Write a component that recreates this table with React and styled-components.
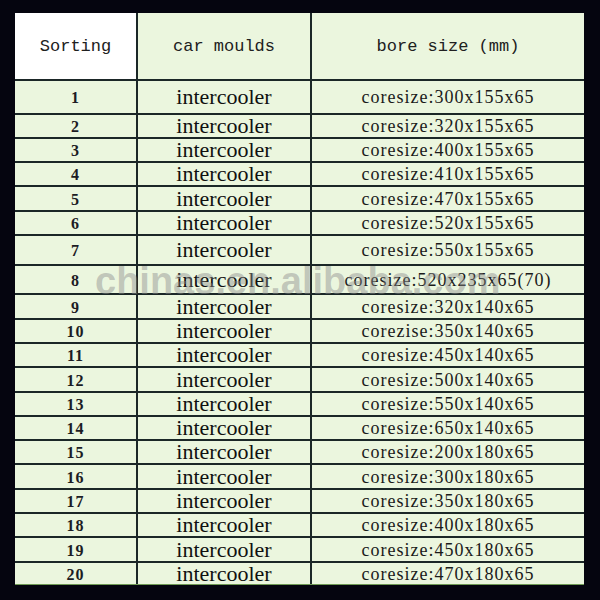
import React from 'react';
import styled, { createGlobalStyle } from 'styled-components';

const GlobalStyle = createGlobalStyle`
  html, body {
    margin: 0;
    padding: 0;
    background: #05050f;
  }
`;

const Page = styled.div`
  width: 600px;
  height: 600px;
  padding: 13px 0 0 15px;
  box-sizing: border-box;
  background: #05050f;
`;

const Table = styled.div`
  position: relative;
  width: 569px;
  display: grid;
  grid-template-columns: 121px 172px 272px;
  grid-template-rows: ${(p) => p.$rows};
  gap: 2px;
  background: #1b2727;
  border-bottom: 1px solid #6f9a55;
`;

const Cell = styled.div`
  display: flex;
  align-items: center;
  justify-content: center;
  background: ${(p) => (p.$white ? '#ffffff' : '#ebf6de')};
  color: #141414;
  line-height: 1;
  white-space: nowrap;
`;

const HeadCell = styled(Cell)`
  font-family: 'Liberation Mono', monospace;
  font-size: 17px;
  color: #202020;
`;

const NumCell = styled(Cell)`
  font-family: 'Liberation Serif', serif;
  font-weight: bold;
  font-size: 16px;
  letter-spacing: 1px;
  color: #1c1c24;
  padding-top: 2px;
`;

const NameCell = styled(Cell)`
  font-family: 'Liberation Serif', serif;
  font-size: 22px;
  color: #101010;
`;

const SizeCell = styled(Cell)`
  font-family: 'Liberation Serif', serif;
  font-size: 18px;
  letter-spacing: 1px;
  color: #1a1a1a;
`;

const Watermark = styled.div`
  position: absolute;
  left: 80px;
  top: 249px;
  font-family: 'Liberation Sans', Arial, sans-serif;
  font-weight: bold;
  font-size: 38px;
  line-height: 38px;
  color: rgba(140, 140, 140, 0.45);
  white-space: nowrap;
  pointer-events: none;
`;

const rows = [
  { h: 32, size: 'coresize:300x155x65' },
  { h: 22, size: 'coresize:320x155x65' },
  { h: 22, size: 'coresize:400x155x65' },
  { h: 22, size: 'coresize:410x155x65' },
  { h: 23, size: 'coresize:470x155x65' },
  { h: 22, size: 'coresize:520x155x65' },
  { h: 28, size: 'coresize:550x155x65' },
  { h: 27, size: 'coresize:520x235x65(70)' },
  { h: 23, size: 'coresize:320x140x65' },
  { h: 22, size: 'corezise:350x140x65' },
  { h: 22, size: 'coresize:450x140x65' },
  { h: 23, size: 'coresize:500x140x65' },
  { h: 22, size: 'coresize:550x140x65' },
  { h: 22, size: 'coresize:650x140x65' },
  { h: 22, size: 'coresize:200x180x65' },
  { h: 23, size: 'coresize:300x180x65' },
  { h: 22, size: 'coresize:350x180x65' },
  { h: 22, size: 'coresize:400x180x65' },
  { h: 23, size: 'coresize:450x180x65' },
  { h: 21, size: 'coresize:470x180x65' },
];

const App = () => {
  const template = ['66px', ...rows.map((r) => `${r.h}px`)].join(' ');
  return (
    <Page>
      <GlobalStyle />
      <Table $rows={template}>
        <HeadCell $white>Sorting</HeadCell>
        <HeadCell>car moulds</HeadCell>
        <HeadCell>bore size (mm)</HeadCell>
        {rows.map((row, i) => (
          <React.Fragment key={i}>
            <NumCell>{i + 1}</NumCell>
            <NameCell>intercooler</NameCell>
            <SizeCell>{row.size}</SizeCell>
          </React.Fragment>
        ))}
        <Watermark>chinas.en.alibaba.com</Watermark>
      </Table>
    </Page>
  );
};

export default App;
